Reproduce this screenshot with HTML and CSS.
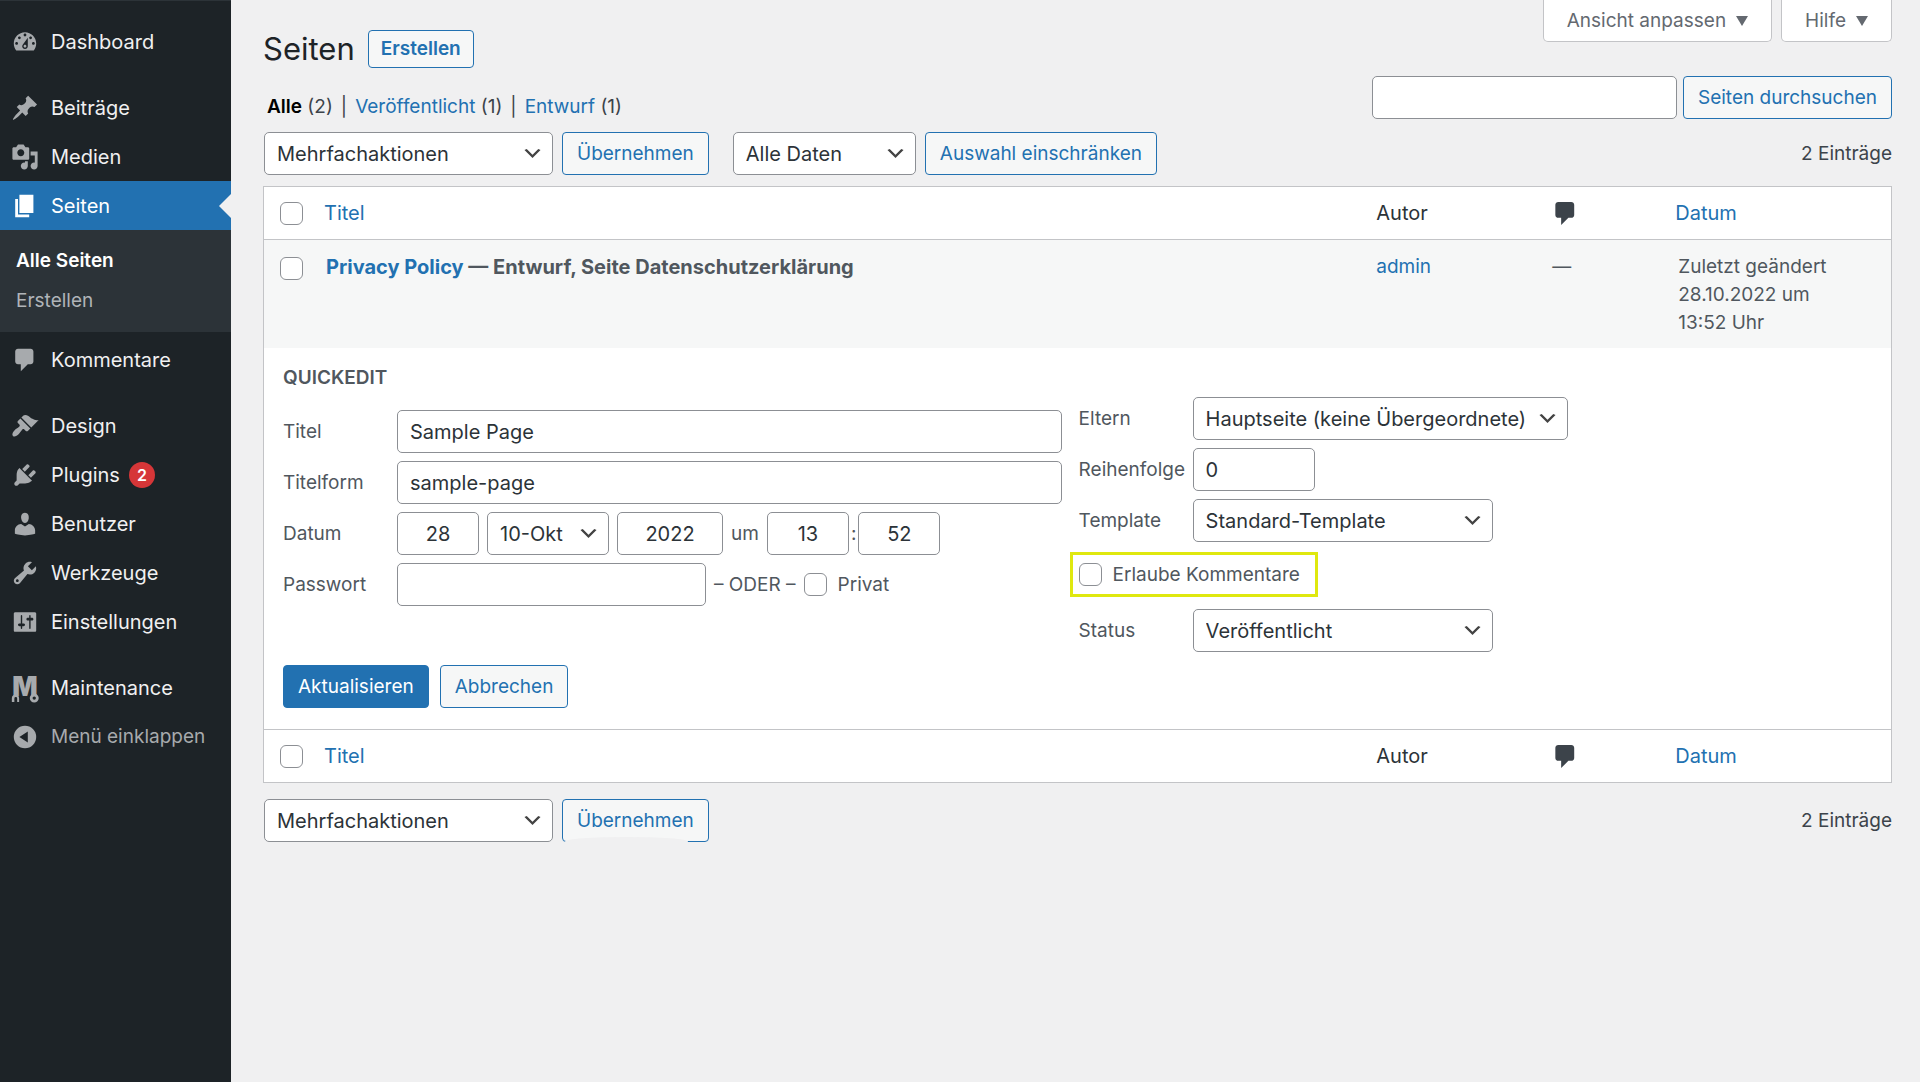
FILE: index.html
```html
<!DOCTYPE html>
<html lang="de">
<head>
  <meta charset="UTF-8">
  <meta name="viewport" content="width=device-width, initial-scale=1.0">
  <title>Seiten</title>
  <link rel="stylesheet" href="styles.css">
</head>
<body>
  <nav class="sidebar">
    <ul class="menu">
      <li>
        <a href="#"><svg viewBox="0 0 20 20"><path d="M3.76 16h12.48c1.1-1.37 1.76-3.11 1.76-5 0-4.42-3.58-8-8-8s-8 3.58-8 8c0 1.89.66 3.63 1.76 5zM10 4c.55 0 1 .45 1 1s-.45 1-1 1-1-.45-1-1 .45-1 1-1zM6 6c.55 0 1 .45 1 1s-.45 1-1 1-1-.45-1-1 .45-1 1-1zm8 0c.55 0 1 .45 1 1s-.45 1-1 1-1-.45-1-1 .45-1 1-1zm-5.37 5.55L12 7v6c0 1.1-.9 2-2 2s-2-.9-2-2c0-.57.24-1.08.63-1.45zM4 10c.55 0 1 .45 1 1s-.45 1-1 1-1-.45-1-1 .45-1 1-1zm12 0c.55 0 1 .45 1 1s-.45 1-1 1-1-.45-1-1 .45-1 1-1zm-5 3c0-.55-.45-1-1-1s-1 .45-1 1 .45 1 1 1 1-.45 1-1z"/></svg>Dashboard</a>
      </li>
      <li class="group">
        <a href="#"><svg viewBox="0 0 20 20"><path d="M10.44 3.02l1.82-1.82 6.36 6.35-1.83 1.82c-1.05-.68-2.48-.57-3.41.36l-.75.75c-.92.93-1.04 2.35-.35 3.41l-1.83 1.82-2.41-2.41-2.8 2.79c-.42.42-3.38 2.71-3.8 2.29s1.86-3.39 2.28-3.81l2.79-2.79L4.1 9.36l1.83-1.82c1.05.69 2.48.57 3.4-.36l.75-.75c.93-.92 1.05-2.35.36-3.41z"/></svg>Beiträge</a>
      </li>
      <li>
        <a href="#"><svg viewBox="0 0 20 20"><path d="M13 11V4c0-.55-.45-1-1-1h-1.67L9 1H5L3.67 3H2c-.55 0-1 .45-1 1v7c0 .55.45 1 1 1h10c.55 0 1-.45 1-1zM7 4.5c1.38 0 2.5 1.12 2.5 2.5S8.38 9.5 7 9.5 4.5 8.38 4.5 7 5.62 4.5 7 4.5zM14 6h5v10.5c0 1.38-1.12 2.5-2.5 2.5S14 17.88 14 16.5s1.12-2.5 2.5-2.5c.17 0 .34.02.5.05V9h-3V6zm-4 8.05V13h2v3.5c0 1.38-1.12 2.5-2.5 2.5S7 17.88 7 16.5 8.12 14 9.5 14c.17 0 .34.02.5.05z"/></svg>Medien</a>
      </li>
      <li class="current">
        <a href="#"><svg viewBox="0 0 20 20"><path d="M6 15V2h10v13H6zm-1 1h8v2H3V5h2v11z"/></svg>Seiten</a>
        <ul class="submenu">
          <li><a href="#" class="active">Alle Seiten</a></li>
          <li><a href="#">Erstellen</a></li>
        </ul>
      </li>
      <li>
        <a href="#"><svg viewBox="0 0 20 20"><path d="M5 2h9c1.1 0 2 .9 2 2v7c0 1.1-.9 2-2 2h-2l-5 5v-5H5c-1.1 0-2-.9-2-2V4c0-1.1.9-2 2-2z"/></svg>Kommentare</a>
      </li>
      <li class="group">
        <a href="#"><svg viewBox="0 0 20 20"><path d="M14.48 11.06L7.41 3.99l1.5-1.5c.5-.56 2.3-.47 3.51.32 1.21.8 1.43 1.28 2.91 2.1 1.18.64 2.45 1.26 4.45.85zm-.71.71L6.7 4.7 4.93 6.47c-.39.39-.39 1.02 0 1.41l1.06 1.06c.39.39.39 1.03 0 1.42-.6.6-1.43 1.11-2.21 1.69-.35.26-.7.53-1.01.84C1.43 14.23.4 16.08 1.4 17.07c.99 1 2.84-.03 4.18-1.36.31-.31.58-.66.85-1.02.57-.78 1.08-1.61 1.69-2.21.39-.39 1.02-.39 1.41 0l1.06 1.06c.39.39 1.02.39 1.41 0z"/></svg>Design</a>
      </li>
      <li>
        <a href="#"><svg viewBox="0 0 20 20"><path d="M13.11 4.36L9.87 7.6 8 5.73l3.24-3.24c.35-.34 1.05-.2 1.56.32.52.51.66 1.21.31 1.55zm-8 1.77l.91-1.12 9.01 9.01-1.19.84c-.71.71-2.63 1.16-3.82 1.16H6.14L4.9 17.26c-.59.59-1.54.59-2.12 0-.59-.58-.59-1.53 0-2.12l1.24-1.24v-3.88c0-1.13.4-3.19 1.09-3.89zm7.26 3.97l3.24-3.24c.34-.35 1.04-.21 1.55.31.52.51.66 1.21.31 1.55l-3.24 3.25z"/></svg>Plugins <span class="count">2</span></a>
      </li>
      <li>
        <a href="#"><svg viewBox="0 0 20 20"><path d="M10 9.25c-2.27 0-2.73-3.44-2.73-3.44C7 4.02 7.82 2 9.97 2c2.16 0 2.98 2.02 2.71 3.81 0 0-.41 3.44-2.68 3.44zm0 2.57L12.72 10c2.39 0 4.52 2.33 4.52 4.53v2.49s-3.65 1.13-7.24 1.13c-3.65 0-7.24-1.13-7.24-1.13v-2.49c0-2.25 1.94-4.48 4.47-4.48z"/></svg>Benutzer</a>
      </li>
      <li>
        <a href="#"><svg viewBox="0 0 20 20"><path d="M16.68 9.77c-1.34 1.34-3.3 1.67-4.95.99l-5.41 6.52c-.99.99-2.59.99-3.58 0s-.99-2.59 0-3.57l6.52-5.42c-.68-1.65-.35-3.61.99-4.95 1.28-1.28 3.12-1.62 4.72-1.06l-2.89 2.89 2.82 2.82 2.86-2.87c.53 1.58.18 3.39-1.08 4.65zM3.81 16.21c.4.39 1.04.39 1.43 0 .4-.4.4-1.04 0-1.43-.39-.4-1.03-.4-1.43 0-.39.39-.39 1.03 0 1.43z"/></svg>Werkzeuge</a>
      </li>
      <li>
        <a href="#"><svg viewBox="0 0 20 20"><path d="M18 16V4c0-1.1-.9-1-2-1H4c-1.1 0-2-.1-2 1v12c0 1.1.9 1 2 1h12c1.1 0 2 .1 2-1zM8 11h1c.55 0 1 .45 1 1s-.45 1-1 1H8v1.5c0 .28-.22.5-.5.5s-.5-.22-.5-.5V13H6c-.55 0-1-.45-1-1s.45-1 1-1h1V5.5c0-.28.22-.5.5-.5s.5.22.5.5V11zm5-2h-1c-.55 0-1-.45-1-1s.45-1 1-1h1V5.5c0-.28.22-.5.5-.5s.5.22.5.5V7h1c.55 0 1 .45 1 1s-.45 1-1 1h-1v5.5c0 .28-.22.5-.5.5s-.5-.22-.5-.5V9z"/></svg>Einstellungen</a>
      </li>
      <li class="group">
        <a href="#"><svg viewBox="0 0 20 20"><text class="mark" x="10" y="16" text-anchor="middle">M</text><path d="M.6 20v-2.5a2.6 2.6 0 0 1 5.2 0V20H4.4v-2.5a1 1 0 0 0-2 0V20z"/><circle class="ring" cx="16.6" cy="17.2" r="2.2"/></svg>Maintenance</a>
      </li>
      <li>
        <button type="button" class="collapse"><svg viewBox="0 0 20 20"><path fill-rule="evenodd" d="M10 2a8 8 0 1 1 0 16 8 8 0 0 1 0-16zm2 4l-6 4 6 4z"/></svg>Menü einklappen</button>
      </li>
    </ul>
  </nav>

  <main class="content">
    <div class="screen-tabs">
      <button type="button">Ansicht anpassen <span class="caret"></span></button>
      <button type="button">Hilfe <span class="caret"></span></button>
    </div>

    <header class="page-head">
      <div>
        <div class="heading">
          <h1>Seiten</h1>
          <a href="#" class="add-new">Erstellen</a>
        </div>
        <ul class="views">
          <li><a href="#" class="active">Alle</a> (2)</li>
          <li><a href="#">Veröffentlicht</a> (1)</li>
          <li><a href="#">Entwurf</a> (1)</li>
        </ul>
      </div>
      <form class="search">
        <input type="search" aria-label="Seiten durchsuchen">
        <button type="button" class="button">Seiten durchsuchen</button>
      </form>
    </header>

    <div class="tablenav">
      <select class="bulk" aria-label="Mehrfachaktionen"><option>Mehrfachaktionen</option></select>
      <button type="button" class="button">Übernehmen</button>
      <select class="dates" aria-label="Nach Datum filtern"><option>Alle Daten</option></select>
      <button type="button" class="button">Auswahl einschränken</button>
      <span class="total">2 Einträge</span>
    </div>

    <table class="pages">
      <colgroup>
        <col class="col-check">
        <col>
        <col class="col-author">
        <col class="col-comments">
        <col class="col-date">
      </colgroup>
      <thead>
        <tr>
          <th class="check"><input type="checkbox" aria-label="Alle auswählen"></th>
          <th><a href="#">Titel</a></th>
          <th>Autor</th>
          <th><svg class="bubble" viewBox="0 0 20 20" role="img" aria-label="Kommentare"><path d="M5 2h9c1.1 0 2 .9 2 2v7c0 1.1-.9 2-2 2h-2l-5 5v-5H5c-1.1 0-2-.9-2-2V4c0-1.1.9-2 2-2z"/></svg></th>
          <th><a href="#">Datum</a></th>
        </tr>
      </thead>
      <tbody>
        <tr class="entry">
          <td class="check"><input type="checkbox" aria-label="Privacy Policy auswählen"></td>
          <td class="title"><strong><a href="#">Privacy Policy</a> — Entwurf, Seite Datenschutzerklärung</strong></td>
          <td><a href="#">admin</a></td>
          <td class="no-comments">—</td>
          <td class="date">Zuletzt geändert<br>28.10.2022 um<br>13:52 Uhr</td>
        </tr>
        <tr>
          <td colspan="5" class="quick-edit">
            <form>
              <h2>QuickEdit</h2>
              <div class="columns">
                <div class="col-left">
                  <div class="field">
                    <label for="title">Titel</label>
                    <input type="text" id="title" class="wide" value="Sample Page">
                  </div>
                  <div class="field">
                    <label for="slug">Titelform</label>
                    <input type="text" id="slug" class="wide" value="sample-page">
                  </div>
                  <div class="field">
                    <label for="day">Datum</label>
                    <div class="timestamp">
                      <input type="text" id="day" value="28">
                      <select aria-label="Monat"><option>10-Okt</option></select>
                      <input type="text" class="year" aria-label="Jahr" value="2022">
                      <span>um</span>
                      <div class="clock">
                        <input type="text" aria-label="Stunde" value="13">:<input type="text" aria-label="Minute" value="52">
                      </div>
                    </div>
                  </div>
                  <div class="field">
                    <label for="password">Passwort</label>
                    <div class="password">
                      <input type="text" id="password">
                      <span>– ODER –</span>
                      <label class="tick"><input type="checkbox">Privat</label>
                    </div>
                  </div>
                </div>

                <div class="col-right">
                  <div class="field">
                    <label for="parent">Eltern</label>
                    <select id="parent" class="parent"><option>Hauptseite (keine Übergeordnete)</option></select>
                  </div>
                  <div class="field">
                    <label for="order">Reihenfolge</label>
                    <input type="text" id="order" class="order" value="0">
                  </div>
                  <div class="field">
                    <label for="template">Template</label>
                    <select id="template"><option>Standard-Template</option></select>
                  </div>
                  <label class="tick highlight"><input type="checkbox">Erlaube Kommentare</label>
                  <div class="field">
                    <label for="status">Status</label>
                    <select id="status"><option>Veröffentlicht</option></select>
                  </div>
                </div>
              </div>
              <div class="actions">
                <button type="button" class="button primary">Aktualisieren</button>
                <button type="button" class="button">Abbrechen</button>
              </div>
            </form>
          </td>
        </tr>
      </tbody>
      <tfoot>
        <tr>
          <th class="check"><input type="checkbox" aria-label="Alle auswählen"></th>
          <th><a href="#">Titel</a></th>
          <th>Autor</th>
          <th><svg class="bubble" viewBox="0 0 20 20" role="img" aria-label="Kommentare"><path d="M5 2h9c1.1 0 2 .9 2 2v7c0 1.1-.9 2-2 2h-2l-5 5v-5H5c-1.1 0-2-.9-2-2V4c0-1.1.9-2 2-2z"/></svg></th>
          <th><a href="#">Datum</a></th>
        </tr>
      </tfoot>
    </table>

    <div class="tablenav bottom">
      <select class="bulk" aria-label="Mehrfachaktionen"><option>Mehrfachaktionen</option></select>
      <button type="button" class="button">Übernehmen</button>
      <span class="total">2 Einträge</span>
    </div>
  </main>
</body>
</html>
```
FILE: styles.css
```css
:root {
  --bg: #f0f0f1;
  --dark: #1d2327;
  --submenu: #2c3338;
  --blue: #2271b1;
  --text: #3c434a;
  --muted: #50575e;
  --border: #c3c4c7;
  --field-border: #8c8f94;
}

* {
  box-sizing: border-box;
  margin: 0;
  padding: 0;
}

body {
  display: flex;
  min-height: 100vh;
  background: var(--bg);
  color: var(--text);
  font-family: Inter, "Liberation Sans", sans-serif;
  font-size: 19px;
  line-height: 28px;
}

ul {
  list-style: none;
}

a {
  color: var(--blue);
  text-decoration: none;
}

button,
input,
select {
  font: inherit;
}

/* Sidebar */
.sidebar {
  flex: 0 0 231px;
  background: var(--dark);
  border-top: 1px solid var(--submenu);
}

.menu {
  padding-top: 16px;
}

.menu .group {
  margin-top: 17px;
}

.menu > li > a,
.collapse {
  display: flex;
  align-items: center;
  width: 100%;
  height: 49px;
  color: #f0f0f1;
  font-size: 20px;
}

.menu svg {
  width: 28px;
  height: 28px;
  margin: 0 12px 0 11px;
  fill: #a7aaad;
  overflow: visible;
}

.menu .mark {
  font-size: 19px;
  font-weight: 900;
}

.menu .ring {
  fill: var(--dark);
  stroke: #a7aaad;
  stroke-width: 2px;
}

.menu .collapse {
  border: none;
  background: none;
  color: #a7aaad;
  font-size: 19px;
  cursor: pointer;
}

.current {
  margin-bottom: 3px;
}

.menu .current > a {
  position: relative;
  background: var(--blue);
  color: #fff;
}

.menu .current svg {
  fill: #fff;
}

.current > a::after {
  content: "";
  position: absolute;
  right: 0;
  top: 13px;
  border: 12px solid transparent;
  border-right-color: var(--bg);
  border-left-width: 0;
}

.submenu {
  padding: 11px 16px;
  background: var(--submenu);
}

.submenu li {
  padding: 6px 0;
}

.submenu a {
  color: #b0b4b8;
}

.submenu .active {
  color: #fff;
  font-weight: 600;
}

.count {
  width: 26px;
  height: 26px;
  margin-left: 9px;
  border-radius: 50%;
  background: #d63638;
  color: #fff;
  font-size: 16px;
  font-weight: 600;
  line-height: 26px;
  text-align: center;
}

/* Content */
.content {
  flex: 1;
  min-width: 0;
  padding: 0 28px 0 32px;
}

.screen-tabs {
  display: flex;
  justify-content: flex-end;
  gap: 9px;
}

.screen-tabs button {
  display: flex;
  align-items: center;
  gap: 10px;
  height: 42px;
  padding: 0 23px;
  border: 1px solid var(--border);
  border-top: none;
  border-radius: 0 0 5px 5px;
  background: #fff;
  color: #646970;
}

.caret {
  border: 6px solid transparent;
  border-top: 10px solid #646970;
  border-bottom: none;
}

.page-head {
  display: flex;
  justify-content: space-between;
  margin-top: -14px;
}

.heading {
  display: flex;
  align-items: center;
  gap: 13px;
}

h1 {
  color: var(--dark);
  font-size: 31px;
  font-weight: 400;
  line-height: 42px;
}

.add-new {
  padding: 4px 12px;
  border: 1px solid var(--blue);
  border-radius: 4px;
  background: #f6f7f7;
  font-weight: 600;
}

.views {
  display: flex;
  padding: 23px 4px 0;
}

.views li + li::before {
  content: "|";
  margin: 0 8px;
}

.views .active {
  color: #000;
  font-weight: 600;
}

.search {
  display: flex;
  gap: 6px;
  padding-top: 48px;
}

.search input {
  width: 305px;
}

input[type="text"],
input[type="search"],
select {
  height: 43px;
  padding: 0 12px;
  border: 1px solid var(--field-border);
  border-radius: 5px;
  background: #fff;
  color: #2c3338;
  font-size: 20px;
}

select {
  appearance: none;
  padding-right: 36px;
  background: #fff url('data:image/svg+xml,<svg xmlns="http://www.w3.org/2000/svg" viewBox="0 0 20 20"><path d="M5 6l5 5 5-5 2 1-7 7-7-7 2-1z" fill="%23444"/></svg>') no-repeat right 8px center / 23px 23px;
}

input[type="checkbox"] {
  appearance: none;
  width: 23px;
  height: 23px;
  border: 1px solid var(--field-border);
  border-radius: 6px;
  background: #fff;
}

.button {
  height: 43px;
  padding: 0 14px;
  border: 1px solid var(--blue);
  border-radius: 4px;
  background: #f6f7f7;
  color: var(--blue);
  white-space: nowrap;
}

.button.primary {
  background: var(--blue);
  color: #fff;
}

.tablenav {
  display: flex;
  align-items: center;
  gap: 9px;
  padding: 11px 0 11px 1px;
}

.tablenav.bottom {
  padding-top: 16px;
}

.bulk {
  width: 289px;
}

.dates {
  width: 183px;
  margin-left: 15px;
}

.total {
  margin-left: auto;
}

/* Clipped lower edge of the last button */
.tablenav.bottom .button {
  position: relative;
}

.tablenav.bottom .button::after {
  content: "";
  position: absolute;
  left: 2px;
  right: 20px;
  bottom: -5px;
  height: 9px;
  border-radius: 50%;
  background: var(--bg);
}

/* Page list */
.pages {
  width: 100%;
  table-layout: fixed;
  border: 1px solid var(--border);
  border-spacing: 0;
  background: #fff;
}

.col-check {
  width: 48px;
}

.col-author {
  width: 11%;
}

.col-comments {
  width: 120px;
}

.col-date {
  width: 14%;
}

.pages th {
  height: 53px;
  padding: 0 12px;
  color: #2c3338;
  font-size: 20px;
  font-weight: 400;
  text-align: left;
}

.pages thead th {
  border-bottom: 1px solid var(--border);
}

.pages tfoot th {
  border-top: 1px solid var(--border);
}

.pages .check {
  padding: 0 0 0 16px;
}

.check input {
  display: block;
}

.bubble {
  display: block;
  width: 29px;
  height: 29px;
  margin-left: -4px;
  fill: #3c434a;
}

.entry td {
  height: 108px;
  padding: 13px 12px 0;
  background: #f6f7f7;
  color: var(--muted);
  vertical-align: top;
}

.pages .entry .check {
  padding-top: 17px;
}

.entry .title {
  padding-left: 14px;
  font-size: 20px;
}

.entry strong {
  font-weight: 700;
}

.entry .no-comments {
  padding-left: 9px;
}

.entry .date {
  padding-left: 15px;
}

/* Quick edit */
.quick-edit {
  padding: 16px 19px 21px;
  color: var(--muted);
}

.quick-edit h2 {
  font-size: 19px;
  font-weight: 600;
  line-height: 28px;
  text-transform: uppercase;
}

.columns {
  display: grid;
  grid-template-columns: 49% 1fr;
  gap: 8px;
}

.col-left,
.col-right {
  display: flex;
  flex-direction: column;
  gap: 8px;
}

.col-left {
  padding-top: 18px;
}

.col-right {
  padding-top: 5px;
}

.col-right .field {
  padding-left: 9px;
}

.field {
  display: flex;
  align-items: center;
}

.field > label {
  flex: 0 0 114px;
}

.wide {
  flex: 1;
  min-width: 0;
}

.timestamp,
.password {
  display: flex;
  align-items: center;
  gap: 8px;
}

.timestamp input {
  width: 82px;
  text-align: center;
}

.timestamp .year {
  width: 106px;
}

.timestamp select {
  width: 122px;
}

.clock {
  display: flex;
  align-items: center;
  gap: 2px;
}

.password input[type="text"] {
  width: 309px;
}

.tick {
  display: flex;
  align-items: center;
  gap: 11px;
}

.highlight {
  align-self: flex-start;
  height: 45px;
  margin: 2px 0 4px;
  padding: 0 15px 0 6px;
  border: 3px solid #dfe80f;
}

.col-right select {
  width: 300px;
}

.col-right .parent {
  width: 375px;
}

.col-right .order {
  width: 122px;
}

.actions {
  display: flex;
  gap: 11px;
  margin-top: 13px;
}
```
